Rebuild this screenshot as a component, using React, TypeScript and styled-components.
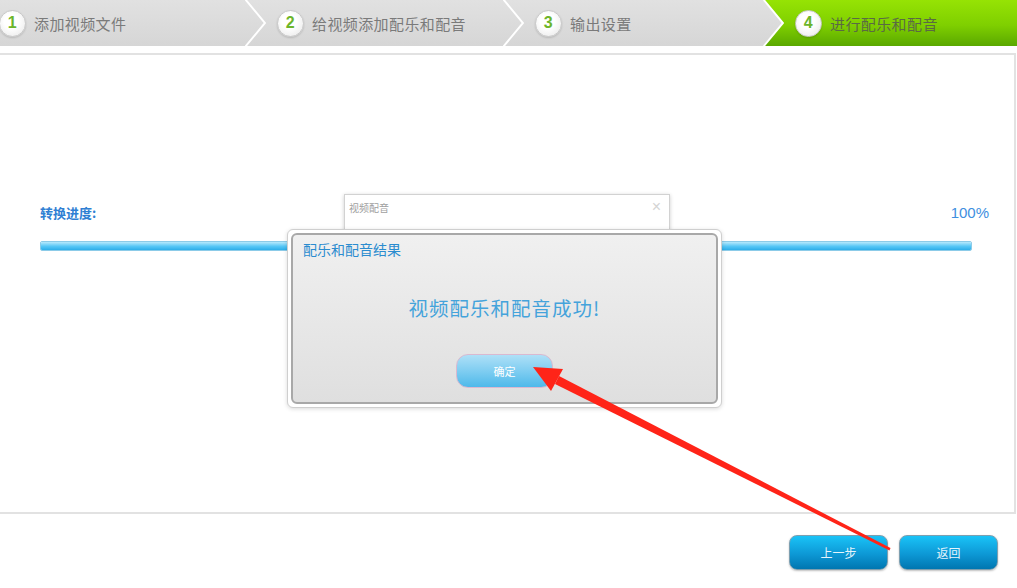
import React from "react";
import styled, {createGlobalStyle} from "styled-components";

const GlobalStyle = createGlobalStyle`
  html, body {
    margin: 0;
    padding: 0;
    background: #ffffff;
  }
  body {
    font-family: "Noto Sans CJK SC", "Noto Sans", "Liberation Sans", sans-serif;
  }
`;

const Screen = styled.div`
  position: relative;
  width: 1017px;
  height: 588px;
  overflow: hidden;
  background: #ffffff;
`;

const StepBar = styled.div`
  display: flex;
  height: 46px;
  background: linear-gradient(#e1e1e1, #d6d6d6);
`;

const Step = styled.div<{ $w: number; $active?: boolean; $first?: boolean }>`
  display: flex;
  align-items: center;
  gap: 8px;
  width: ${(p) => p.$w}px;
  padding-left: ${(p) => (p.$first ? 0 : 11)}px;
  margin-left: ${(p) => (p.$first ? -1 : 0)}px;
  box-sizing: border-box;
  background: ${(p) =>
    p.$active ? "linear-gradient(#96e304, #7fcf00 55%, #5aa800)" : "transparent"};
  color: ${(p) => (p.$active ? "#5a6a44" : "#7a7a7a")};
  font-size: 15px;
  letter-spacing: 0.4px;
  white-space: nowrap;
`;

const StepNum = styled.span`
  display: flex;
  align-items: center;
  justify-content: center;
  width: 25px;
  height: 25px;
  border-radius: 50%;
  border: 1px solid #c9c9c9;
  background: radial-gradient(circle at 45% 40%, #ffffff 35%, #e6e6e6 100%);
  box-shadow: 0 1px 2px rgba(0, 0, 0, 0.15);
  color: #6cb52a;
  font-family: "Liberation Sans", Arial, sans-serif;
  font-weight: bold;
  font-size: 16px;
`;

const Panel = styled.div`
  margin: 7px 1px 0 0;
  height: 461px;
  border: 2px solid #e2e2e2;
  border-left: none;
  padding: 146px 25px 0 40px;
  box-sizing: border-box;
`;

const ProgressHead = styled.div`
  display: flex;
  justify-content: space-between;
  align-items: center;
  height: 22px;
`;

const ProgressLabel = styled.span`
  color: #2f7fd3;
  font-size: 13px;
  font-weight: bold;
`;

const ProgressValue = styled.span`
  color: #3e8fe0;
  font-size: 15px;
  font-family: "Liberation Sans", Arial, sans-serif;
`;

const Track = styled.div`
  margin-top: 18px;
  width: 932px;
  height: 10px;
  border-radius: 2px;
  border: 1px solid #8ccbe8;
  box-sizing: border-box;
  overflow: hidden;
`;

const Fill = styled.div`
  height: 100%;
  background: linear-gradient(#b7e9fc, #55c6f6 55%, #2eaee9);
`;

const Footer = styled.div`
  display: flex;
  justify-content: flex-end;
  gap: 11px;
  padding: 21px 19px 0 0;
`;

const NavButton = styled.button`
  width: 99px;
  height: 35px;
  border-radius: 8px;
  border: 1px solid #7d9fb0;
  background: linear-gradient(#1ac3f7, #0d98d5 55%, #0076b0);
  color: #e6f5fc;
  font-family: inherit;
  font-size: 12px;
  box-shadow: 0 1px 2px rgba(0, 0, 0, 0.25);
`;

const BackDialog = styled.div`
  position: absolute;
  left: 344px;
  top: 194px;
  width: 326px;
  height: 60px;
  background: #ffffff;
  border: 1px solid #d2d2d2;
  box-shadow: 0 1px 4px rgba(0, 0, 0, 0.2);
  display: flex;
  justify-content: space-between;
  padding: 5px 8px 0 4px;
  box-sizing: border-box;
  color: #a0a0a0;
  font-size: 10px;
`;

const Close = styled.span`
  color: #d4d4d4;
  font-size: 16px;
  line-height: 14px;
  font-family: "Liberation Sans", Arial, sans-serif;
`;

const Dialog = styled.div`
  position: absolute;
  left: 287px;
  top: 229px;
  width: 435px;
  height: 179px;
  padding: 3px;
  box-sizing: border-box;
  background: #ffffff;
  border: 1px solid #cfcfcf;
  border-radius: 6px;
  box-shadow: 0 1px 4px rgba(0, 0, 0, 0.15);
`;

const DialogInner = styled.div`
  height: 100%;
  box-sizing: border-box;
  border: 2px solid #a8a8a8;
  border-radius: 6px;
  background: linear-gradient(#f0f0f0, #e6e6e6 60%, #dfdfdf);
  display: flex;
  flex-direction: column;
  align-items: center;
  padding: 5px 10px 0;
`;

const DialogTitle = styled.div`
  align-self: flex-start;
  color: #2b8ccf;
  font-size: 14px;
  line-height: 18px;
`;

const DialogMessage = styled.div`
  margin-top: 35px;
  color: #44a3db;
  font-size: 19.5px;
  letter-spacing: 1px;
`;

const OkButton = styled.button`
  margin-top: 32px;
  width: 97px;
  height: 34px;
  border-radius: 12px;
  border: 1px solid #d9b9d0;
  background: linear-gradient(#aee0f7, #7fcdf1 50%, #4eb9ea);
  color: #ffffff;
  font-family: inherit;
  font-size: 11px;
`;

const Overlay = styled.svg`
  position: absolute;
  left: 0;
  top: 0;
  pointer-events: none;
`;

const steps = [
  {n: 1, label: "添加视频文件", w: 246},
  {n: 2, label: "给视频添加配乐和配音", w: 237},
  {n: 3, label: "输出设置", w: 239},
  {n: 4, label: "进行配乐和配音", w: 233},
];

function Chevron({green}: { green?: boolean }) {
  return (
    <svg width="21" height="46" viewBox="0 0 21 46" style={{flexShrink: 0}}>
      <defs>
        <linearGradient id="gr" x1="0" y1="0" x2="0" y2="1">
          <stop offset="0" stopColor="#96e304"/>
          <stop offset="0.55" stopColor="#7fcf00"/>
          <stop offset="1" stopColor="#5aa800"/>
        </linearGradient>
      </defs>
      {green && <polygon points="0,0 21,0 21,46 0,46 20,23" fill="url(#gr)"/>}
      <polyline points="0,-1 20,23 0,47" fill="none" stroke="#ffffff" strokeWidth="2"/>
    </svg>
  );
}

export default function App() {
  return (
    <Screen>
      <GlobalStyle/>
      <StepBar>
        {steps.map((s, i) => (
          <React.Fragment key={s.n}>
            {i > 0 && <Chevron green={i === 3}/>}
            <Step $w={s.w} $active={i === 3} $first={i === 0}>
              <StepNum>{s.n}</StepNum>
              {s.label}
            </Step>
          </React.Fragment>
        ))}
      </StepBar>
      <Panel>
        <ProgressHead>
          <ProgressLabel>转换进度:</ProgressLabel>
          <ProgressValue>100%</ProgressValue>
        </ProgressHead>
        <Track>
          <Fill style={{width: "100%"}}/>
        </Track>
      </Panel>
      <Footer>
        <NavButton>上一步</NavButton>
        <NavButton>返回</NavButton>
      </Footer>

      <BackDialog>
        <span>视频配音</span>
        <Close>×</Close>
      </BackDialog>
      <Dialog>
        <DialogInner>
          <DialogTitle>配乐和配音结果</DialogTitle>
          <DialogMessage>视频配乐和配音成功!</DialogMessage>
          <OkButton>确定</OkButton>
        </DialogInner>
      </Dialog>

      <Overlay width="1017" height="588">
        <polygon points="890.5,548 889.5,550.5 555,384 559,376" fill="#ff2418"/>
        <polygon points="533,367 563,369 551,391" fill="#ff2418"/>
      </Overlay>
    </Screen>
  );
}
